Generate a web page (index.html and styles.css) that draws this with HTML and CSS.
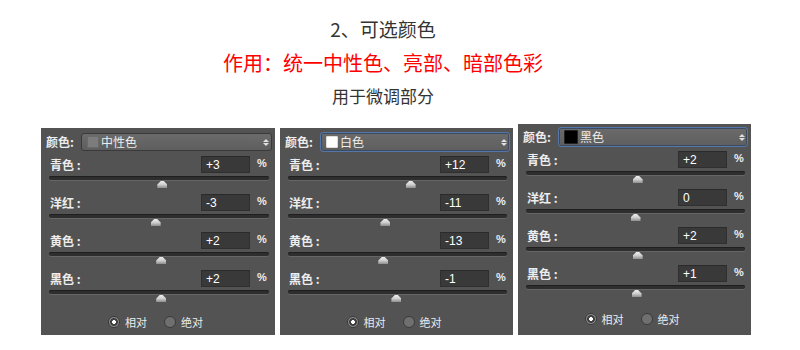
FILE: index.html
```html
<!DOCTYPE html>
<html>

<head>
    <meta charset="UTF-8">
    <title>可选颜色</title>
    <link rel="stylesheet" href="styles.css">
</head>

<body>
    <div class="head">
        <div class="title">2、可选颜色</div>
        <div class="use">作用：统一中性色、亮部、暗部色彩</div>
        <div class="sub">用于微调部分</div>
    </div>

    <div class="panels">
        <!-- 中性色 -->
        <div class="panel panel-wide">
            <div class="pick">
                <span class="pick-label">颜色:</span>
                <div class="select">
                    <span class="swatch swatch-gray"></span>
                    <span class="select-text">中性色</span>
                    <span class="arrows"><i class="up"></i><i class="down"></i></span>
                </div>
            </div>
            <div class="slider-row">
                <div class="field"><span class="field-label">青色 :</span><span class="num">+3</span><span class="pct">%</span></div>
                <div class="track"><span class="thumb" style="left: calc(50% + 1.5%)"></span></div>
            </div>
            <div class="slider-row">
                <div class="field"><span class="field-label">洋红 :</span><span class="num">-3</span><span class="pct">%</span></div>
                <div class="track"><span class="thumb" style="left: calc(50% - 1.5%)"></span></div>
            </div>
            <div class="slider-row">
                <div class="field"><span class="field-label">黄色 :</span><span class="num">+2</span><span class="pct">%</span></div>
                <div class="track"><span class="thumb" style="left: calc(50% + 1%)"></span></div>
            </div>
            <div class="slider-row">
                <div class="field"><span class="field-label">黑色 :</span><span class="num">+2</span><span class="pct">%</span></div>
                <div class="track"><span class="thumb" style="left: calc(50% + 1%)"></span></div>
            </div>
            <div class="modes">
                <span class="radio on"></span><span class="mode-text">相对</span>
                <span class="radio"></span><span class="mode-text">绝对</span>
            </div>
        </div>

        <!-- 白色 -->
        <div class="panel">
            <div class="pick">
                <span class="pick-label">颜色:</span>
                <div class="select focus">
                    <span class="swatch swatch-white"></span>
                    <span class="select-text">白色</span>
                    <span class="arrows"><i class="up"></i><i class="down"></i></span>
                </div>
            </div>
            <div class="slider-row">
                <div class="field"><span class="field-label">青色 :</span><span class="num">+12</span><span class="pct">%</span></div>
                <div class="track"><span class="thumb" style="left: calc(50% + 6%)"></span></div>
            </div>
            <div class="slider-row">
                <div class="field"><span class="field-label">洋红 :</span><span class="num">-11</span><span class="pct">%</span></div>
                <div class="track"><span class="thumb" style="left: calc(50% - 5.5%)"></span></div>
            </div>
            <div class="slider-row">
                <div class="field"><span class="field-label">黄色 :</span><span class="num">-13</span><span class="pct">%</span></div>
                <div class="track"><span class="thumb" style="left: calc(50% - 6.5%)"></span></div>
            </div>
            <div class="slider-row">
                <div class="field"><span class="field-label">黑色 :</span><span class="num">-1</span><span class="pct">%</span></div>
                <div class="track"><span class="thumb" style="left: calc(50% - 0.5%)"></span></div>
            </div>
            <div class="modes">
                <span class="radio on"></span><span class="mode-text">相对</span>
                <span class="radio"></span><span class="mode-text">绝对</span>
            </div>
        </div>

        <!-- 黑色 -->
        <div class="panel panel-tall">
            <div class="pick">
                <span class="pick-label">颜色:</span>
                <div class="select focus">
                    <span class="swatch swatch-black"></span>
                    <span class="select-text">黑色</span>
                    <span class="arrows"><i class="up"></i><i class="down"></i></span>
                </div>
            </div>
            <div class="slider-row">
                <div class="field"><span class="field-label">青色 :</span><span class="num">+2</span><span class="pct">%</span></div>
                <div class="track"><span class="thumb" style="left: calc(50% + 1%)"></span></div>
            </div>
            <div class="slider-row">
                <div class="field"><span class="field-label">洋红 :</span><span class="num">0</span><span class="pct">%</span></div>
                <div class="track"><span class="thumb" style="left: 50%"></span></div>
            </div>
            <div class="slider-row">
                <div class="field"><span class="field-label">黄色 :</span><span class="num">+2</span><span class="pct">%</span></div>
                <div class="track"><span class="thumb" style="left: calc(50% + 1%)"></span></div>
            </div>
            <div class="slider-row">
                <div class="field"><span class="field-label">黑色 :</span><span class="num">+1</span><span class="pct">%</span></div>
                <div class="track"><span class="thumb" style="left: calc(50% + 0.5%)"></span></div>
            </div>
            <div class="modes">
                <span class="radio on"></span><span class="mode-text">相对</span>
                <span class="radio"></span><span class="mode-text">绝对</span>
            </div>
        </div>
    </div>
</body>

</html>
```

FILE: styles.css
```css
body {
    margin: 0;
    background-color: #FFF;
    font-family: "Noto Sans CJK SC", "Liberation Sans", sans-serif;
}

.head {
    padding-top: 14px;
    padding-right: 34px;
    text-align: center;
}

.title {
    font-size: 19px;
    line-height: 30px;
    color: #333;
}

.use {
    margin-top: 4px;
    font-size: 20px;
    line-height: 30px;
    color: #FF0000;
}

.sub {
    margin-top: 5px;
    font-size: 17px;
    line-height: 26px;
    color: #333;
}

.panels {
    display: flex;
    align-items: flex-end;
    gap: 5px;
    margin: 15px 0 0 41px;
}

.panel {
    box-sizing: border-box;
    width: 233px;
    height: 207px;
    padding: 5px 3px 0 5px;
    background-color: #535353;
    display: flex;
    flex-direction: column;
    color: #EDEDED;
    font-size: 12px;
}

.panel-wide {
    width: 234px;
}

.panel-tall {
    height: 211px;
    padding-top: 4px;
}

/* 颜色下拉 */
.pick {
    display: flex;
    align-items: center;
    height: 18px;
}

.pick-label {
    flex-shrink: 0;
    width: 35px;
    line-height: 18px;
    white-space: nowrap;
    font-weight: bold;
}

.select {
    flex: 1;
    box-sizing: border-box;
    height: 18px;
    display: flex;
    align-items: center;
    padding-left: 5px;
    border: 1px solid #3A3A3A;
    border-radius: 3px;
    background: linear-gradient(#6B6B6B, #5E5E5E);
}

.select.focus {
    height: 20px;
    border: 1px solid #5576A8;
    box-shadow: inset 0 0 0 1px #3D4B60;
}

.swatch {
    box-sizing: border-box;
    width: 12px;
    height: 12px;
    border: 1px solid #4A4A4A;
    border-radius: 1px;
}

.swatch-gray {
    background-color: #7C7C7C;
    border-color: #6A6A6A;
}

.swatch-white {
    background-color: #FFF;
    border-color: #DDD;
}

.swatch-black {
    width: 14px;
    height: 14px;
    background-color: #000;
    border-color: #222;
}

.select-text {
    margin-left: 2px;
    line-height: 16px;
}

.arrows {
    margin-left: auto;
    margin-right: 2px;
    display: flex;
    flex-direction: column;
    gap: 1px;
}

.arrows i {
    width: 0;
    height: 0;
    border-left: 3px solid transparent;
    border-right: 3px solid transparent;
}

.arrows .up {
    border-bottom: 3px solid #E0E0E0;
}

.arrows .down {
    border-top: 3px solid #E0E0E0;
}

/* 滑块行 */
.slider-row {
    height: 38px;
}

.pick + .slider-row {
    margin-top: 5px;
}

.field {
    display: flex;
    align-items: center;
    height: 17px;
}

.field-label {
    box-sizing: border-box;
    width: 155px;
    padding-left: 4px;
    font-weight: bold;
}

.num {
    box-sizing: border-box;
    width: 49px;
    height: 17px;
    padding: 0 4px;
    line-height: 17px;
    background-color: #393939;
    border: 1px solid #2F2F2F;
    border-top-color: #2A2A2A;
    color: #FFF;
    font-family: "Liberation Sans", sans-serif;
    font-size: 12px;
}

.pct {
    margin-left: 7px;
    margin-top: -3px;
    font-family: "Liberation Sans", sans-serif;
    font-size: 11px;
    font-weight: bold;
}

.track {
    position: relative;
    height: 4px;
    margin: 3px 3px 0 3px;
    border-radius: 2px;
    background-color: #2E2E2E;
    box-shadow: inset 0 1px 0 #1F1F1F, 0 1px 0 #666;
}

.thumb {
    position: absolute;
    top: 5px;
    width: 10px;
    height: 7px;
    margin-left: -5px;
    background: linear-gradient(#F0F0F0 0, #CFCFCF 50%, #8E8E8E 100%);
    clip-path: polygon(35% 0, 65% 0, 100% 50%, 100% 100%, 0 100%, 0 50%);
}

/* 相对 / 绝对 */
.modes {
    flex: 1;
    display: flex;
    align-items: center;
    justify-content: center;
    padding-right: 7px;
    font-size: 11px;
}

.radio {
    box-sizing: border-box;
    width: 12px;
    height: 12px;
    border-radius: 50%;
    border: 1px solid #3A3A3A;
    background-color: #6F6F6F;
}

.radio.on {
    background: radial-gradient(circle, #FFF 0, #FFF 1.6px, #3F3F3F 2.2px, #3F3F3F 3.6px, #8A8A8A 4.2px);
}

.mode-text {
    margin-left: 5px;
    margin-right: 17px;
}

.mode-text:last-child {
    margin-right: 0;
}
```
